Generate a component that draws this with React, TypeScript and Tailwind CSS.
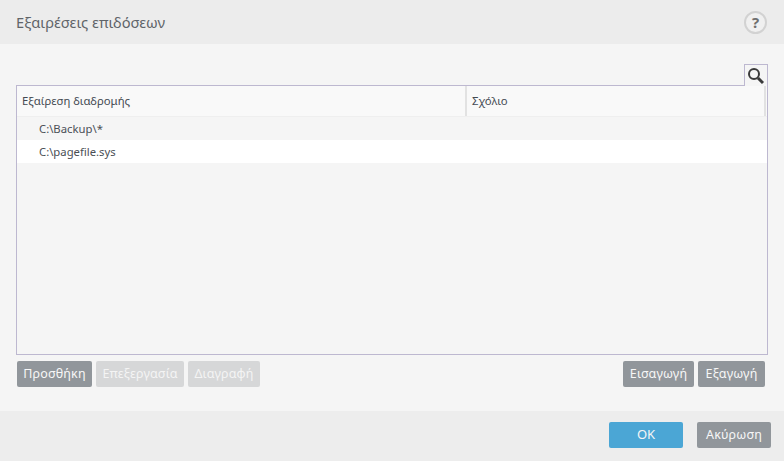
import React from "react";

function Btn({ children, w, kind = "gray" }: { children: React.ReactNode; w: string; kind?: "gray" | "off" }) {
  return (
    <div className={`${w} h-[26px] rounded-[2px] flex items-center justify-center text-[12.5px] tracking-[0.15px] ${kind === "gray" ? "bg-[#91969b] text-[#f7f7f7]" : "bg-[#d6d7d8] text-[#f4f4f4]"}`}>
      {children}
    </div>
  );
}

export default function App() {
  return (
    <div className="w-[784px] h-[461px] flex flex-col overflow-hidden bg-[#f5f5f5] font-['Noto_Sans','Open_Sans',sans-serif] text-[#4a4f55]">
      <div className="h-[44px] shrink-0 bg-[#ececec] flex items-center justify-between pl-[16px] pr-[17px]">
        <div className="text-[14.7px] text-[#5f6469]">Εξαιρέσεις επιδόσεων</div>
        <div className="w-[23px] h-[23px] rounded-full border-2 border-[#d2d2d2] bg-[#f0f0f0] flex items-center justify-center text-[15px] font-bold text-[#6f6f6f]">?</div>
      </div>

      <div className="h-[367px] shrink-0 flex flex-col pl-[16px] pr-[16px] pt-[20px]">
        <div className="flex justify-end">
          <div className="w-[24px] h-[22px] border border-b-0 border-[#bdb8d0] bg-[#f5f5f5] flex items-center justify-center -mb-px relative">
            <svg width="18" height="18" viewBox="0 0 18 18" fill="none">
              <circle cx="7" cy="7" r="5" stroke="#3a3a3a" strokeWidth="2" />
              <path d="M11 11l5 5" stroke="#3a3a3a" strokeWidth="3" />
            </svg>
          </div>
        </div>
        <div className="w-[752px] h-[270px] border border-[#bdb8d0] flex flex-col">
          <div className="h-[31px] shrink-0 flex bg-[#f9f9f9] border-b border-[#efefef] text-[11.3px] text-[#444a52]">
            <div className="w-[450px] flex items-center pl-[5px] border-r-2 border-[#e2e2e2]">Εξαίρεση διαδρομής</div>
            <div className="flex-1 flex items-center pl-[5px] border-r-2 border-[#e2e2e2] mr-[1px]">Σχόλιο</div>
          </div>
          <div className="h-[23px] flex items-center pl-[22px] pt-[1px] text-[11.3px]">C:\Backup\*</div>
          <div className="h-[23px] flex items-center pl-[22px] pt-[1px] text-[11.3px] bg-white">C:\pagefile.sys</div>
        </div>
        <div className="flex justify-between mt-[6px] pl-[1px] pr-[3px]">
          <div className="flex gap-[4px]">
            <Btn w="w-[75px]">Προσθήκη</Btn>
            <Btn w="w-[88px]" kind="off">Επεξεργασία</Btn>
            <Btn w="w-[72px]" kind="off">Διαγραφή</Btn>
          </div>
          <div className="flex gap-[4px]">
            <Btn w="w-[71px]">Εισαγωγή</Btn>
            <Btn w="w-[67px]">Εξαγωγή</Btn>
          </div>
        </div>
      </div>

      <div className="flex-1 bg-[#ededed] flex justify-end gap-[14px] pt-[11px] pr-[13px]">
        <div className="w-[74px] h-[26px] rounded-[2px] bg-[#4ba6d5] text-[#f5f5f5] text-[13px] flex items-center justify-center">OK</div>
        <Btn w="w-[74px]">Ακύρωση</Btn>
      </div>
    </div>
  );
}
